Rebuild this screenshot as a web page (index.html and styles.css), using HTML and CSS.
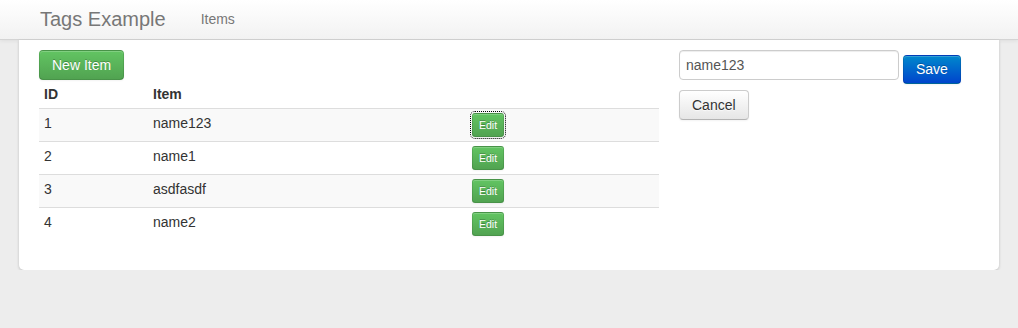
FILE: index.html
```html
<!DOCTYPE html>
<html>
<head>
    <title>Tags Example</title>
    <meta charset="UTF-8">
    <link rel="stylesheet" href="styles.css">
</head>
<body>
    <div class="navbar">
        <div class="navbar-inner">
            <a class="brand" href="#">Tags Example</a>
            <a class="nav-link" href="#">Items</a>
        </div>
    </div>

    <div class="card">
        <div class="row">
            <div class="main">
                <button class="btn btn-success">New Item</button>
                <table class="items">
                    <thead>
                        <tr>
                            <th class="col-id">ID</th>
                            <th class="col-name">Item</th>
                            <th></th>
                        </tr>
                    </thead>
                    <tbody>
                        <tr>
                            <td>1</td>
                            <td>name123</td>
                            <td><button class="btn btn-success btn-mini focused">Edit</button></td>
                        </tr>
                        <tr>
                            <td>2</td>
                            <td>name1</td>
                            <td><button class="btn btn-success btn-mini">Edit</button></td>
                        </tr>
                        <tr>
                            <td>3</td>
                            <td>asdfasdf</td>
                            <td><button class="btn btn-success btn-mini">Edit</button></td>
                        </tr>
                        <tr>
                            <td>4</td>
                            <td>name2</td>
                            <td><button class="btn btn-success btn-mini">Edit</button></td>
                        </tr>
                    </tbody>
                </table>
            </div>
            <div class="side">
                <div class="edit-form">
                    <input class="name-input" type="text" value="name123">
                    <button class="btn btn-primary save">Save</button>
                </div>
                <button class="btn">Cancel</button>
            </div>
        </div>
    </div>
</body>
</html>
```

FILE: styles.css
```css
* { box-sizing: border-box; }
body {
    margin: 0;
    background: #ededed;
    font-family: 'Liberation Sans', Arial, sans-serif;
    font-size: 14px;
    line-height: 20px;
    color: #333;
}
.navbar-inner {
    height: 40px;
    display: flex;
    align-items: center;
    padding-left: 40px;
    background: linear-gradient(to bottom, #ffffff, #f2f2f2);
    border-bottom: 1px solid #d4d4d4;
    box-shadow: 0 1px 4px rgba(0,0,0,0.065);
}
.brand {
    font-size: 20px;
    color: #777;
    text-decoration: none;
    margin-right: 35px;
    margin-top: -1px;
}
.nav-link {
    color: #777;
    text-decoration: none;
    font-size: 14px;
    margin-top: -2px;
}
.card {
    width: 980px;
    margin: 0 19px;
    background: #fff;
    padding: 10px 20px 10px;
    border-radius: 0 0 5px 5px;
    box-shadow: 0 1px 3px rgba(0,0,0,0.2);
}
.row {
    display: flex;
    gap: 20px;
}
.main { width: 620px; }
.side { width: 300px; }

.btn {
    display: inline-block;
    padding: 4px 12px;
    font-family: inherit;
    font-size: 14px;
    line-height: 20px;
    color: #333;
    background: linear-gradient(to bottom, #ffffff, #e6e6e6);
    border: 1px solid #cccccc;
    border-bottom-color: #b3b3b3;
    border-radius: 4px;
    box-shadow: inset 0 1px 0 rgba(255,255,255,0.2), 0 1px 2px rgba(0,0,0,0.05);
    cursor: pointer;
    text-shadow: 0 1px 1px rgba(255,255,255,0.75);
}
.btn-success {
    color: #fff;
    background: linear-gradient(to bottom, #62c462, #51a351);
    border-color: rgba(0,0,0,0.1) rgba(0,0,0,0.1) rgba(0,0,0,0.25);
    text-shadow: 0 -1px 0 rgba(0,0,0,0.25);
}
.btn-primary {
    color: #fff;
    background: linear-gradient(to bottom, #0088cc, #0044cc);
    border-color: rgba(0,0,0,0.1) rgba(0,0,0,0.1) rgba(0,0,0,0.25);
    text-shadow: 0 -1px 0 rgba(0,0,0,0.25);
}
.btn-mini {
    padding: 0 6px;
    font-size: 10.5px;
    line-height: 22px;
    border-radius: 3px;
}
.focused {
    outline: 1px dotted #000;
    outline-offset: 1px;
}

.items {
    width: 100%;
    border-collapse: collapse;
    margin-bottom: 20px;
}
.items th, .items td {
    padding: 4px 5px;
    text-align: left;
    vertical-align: top;
}
.items th { font-weight: bold; }
.items td { border-top: 1px solid #dddddd; }
.items tbody tr:nth-child(odd) td { background: #f9f9f9; }
.col-id { width: 109px; }
.col-name { width: 319px; }

.edit-form {
    display: flex;
    align-items: flex-start;
    gap: 4px;
    height: 30px;
    margin-bottom: 10px;
}
.name-input {
    width: 220px;
    height: 30px;
    padding: 4px 6px;
    font-family: inherit;
    font-size: 14px;
    color: #555;
    border: 1px solid #cccccc;
    border-radius: 4px;
    box-shadow: inset 0 1px 1px rgba(0,0,0,0.075);
}
.save {
    margin-top: 5px;
    height: 29px;
    line-height: 19px;
}
```
